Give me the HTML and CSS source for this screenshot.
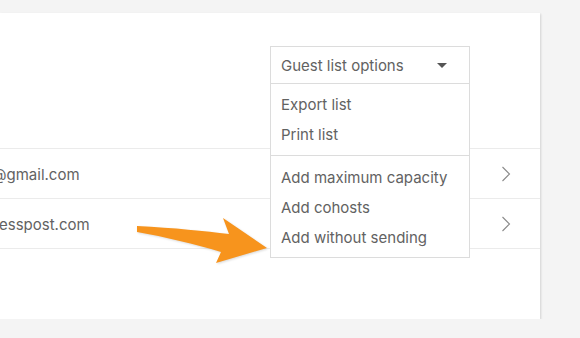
FILE: index.html
```html
<!DOCTYPE html>
<html>
<head>
    <title>Guest list</title>
    <link rel="stylesheet" href="styles.css">
</head>
<body>
    <div class="guest-card">
        <div class="guest-rows">
            <div class="guest-row">
                <span class="guest-email guest-email-cut">@gmail.com</span>
                <svg class="guest-chevron" width="10" height="16" viewBox="0 0 10 16"><path d="M1.5 1 L8.5 8 L1.5 15" fill="none" stroke="#8a8a8a" stroke-width="1.1"/></svg>
            </div>
            <div class="guest-row">
                <span class="guest-email">esspost.com</span>
                <svg class="guest-chevron" width="10" height="16" viewBox="0 0 10 16"><path d="M1.5 1 L8.5 8 L1.5 15" fill="none" stroke="#8a8a8a" stroke-width="1.1"/></svg>
            </div>
        </div>

        <!-- menu ouvert au-dessus de la liste -->
        <div class="options-menu">
            <div class="options-header">
                <span>Guest list options</span>
                <span class="options-caret"></span>
            </div>
            <div class="options-group">
                <div class="options-item">Export list</div>
                <div class="options-item">Print list</div>
            </div>
            <div class="options-group">
                <div class="options-item">Add maximum capacity</div>
                <div class="options-item">Add cohosts</div>
                <div class="options-item">Add without sending</div>
            </div>
        </div>

        <svg class="pointer-arrow" width="150" height="60" viewBox="0 0 150 60">
            <path d="M2 13 C40 15 70 18 94 21 L88 5 L132 35 L81 50 L86 39 C60 31 30 24 2 19 Z" fill="#f7941d"/>
        </svg>
    </div>
</body>
</html>
```

FILE: styles.css
```css
body {
    margin: 0;
    background-color: #f4f4f4;
    font-family: Inter, Roboto, "Liberation Sans", sans-serif;
    color: #626262;
}

.guest-card {
    position: relative;
    margin-top: 13px;
    width: 540px;
    height: 306px;
    background-color: #ffffff;
    box-shadow: 1px 1px 2px rgba(0, 0, 0, 0.14);
    overflow: hidden;
}

.guest-rows {
    padding-top: 135px;
}

.guest-row {
    display: flex;
    align-items: center;
    justify-content: space-between;
    height: 49px;
    border-top: 1px solid #ebebeb;
    font-size: 15px;
}

.guest-row:last-child {
    border-bottom: 1px solid #ebebeb;
}

.guest-email {
    margin-left: -1px;
    padding-top: 1px;
}

.guest-email-cut {
    margin-left: -8px;
}

.guest-chevron {
    margin-right: 29px;
}

.options-menu {
    position: absolute;
    left: 270px;
    top: 33px;
    width: 198px;
    background-color: #ffffff;
    border: 1px solid #dcdcdc;
    font-size: 15px;
}

.options-header {
    display: flex;
    align-items: center;
    justify-content: space-between;
    height: 36px;
    padding: 0 22px 0 10px;
    border-bottom: 1px solid #dcdcdc;
}

.options-caret {
    width: 0;
    height: 0;
    border-left: 5px solid transparent;
    border-right: 5px solid transparent;
    border-top: 5px solid #555555;
}

.options-group {
    padding: 6px 0 5px;
}

.options-group + .options-group {
    border-top: 1px solid #dcdcdc;
    padding: 7px 0 4px;
}

.options-item {
    height: 30px;
    line-height: 30px;
    padding-left: 10px;
}

.pointer-arrow {
    position: absolute;
    left: 135px;
    top: 200px;
    filter: drop-shadow(1px 1px 1px rgba(0, 0, 0, 0.15));
}
```
